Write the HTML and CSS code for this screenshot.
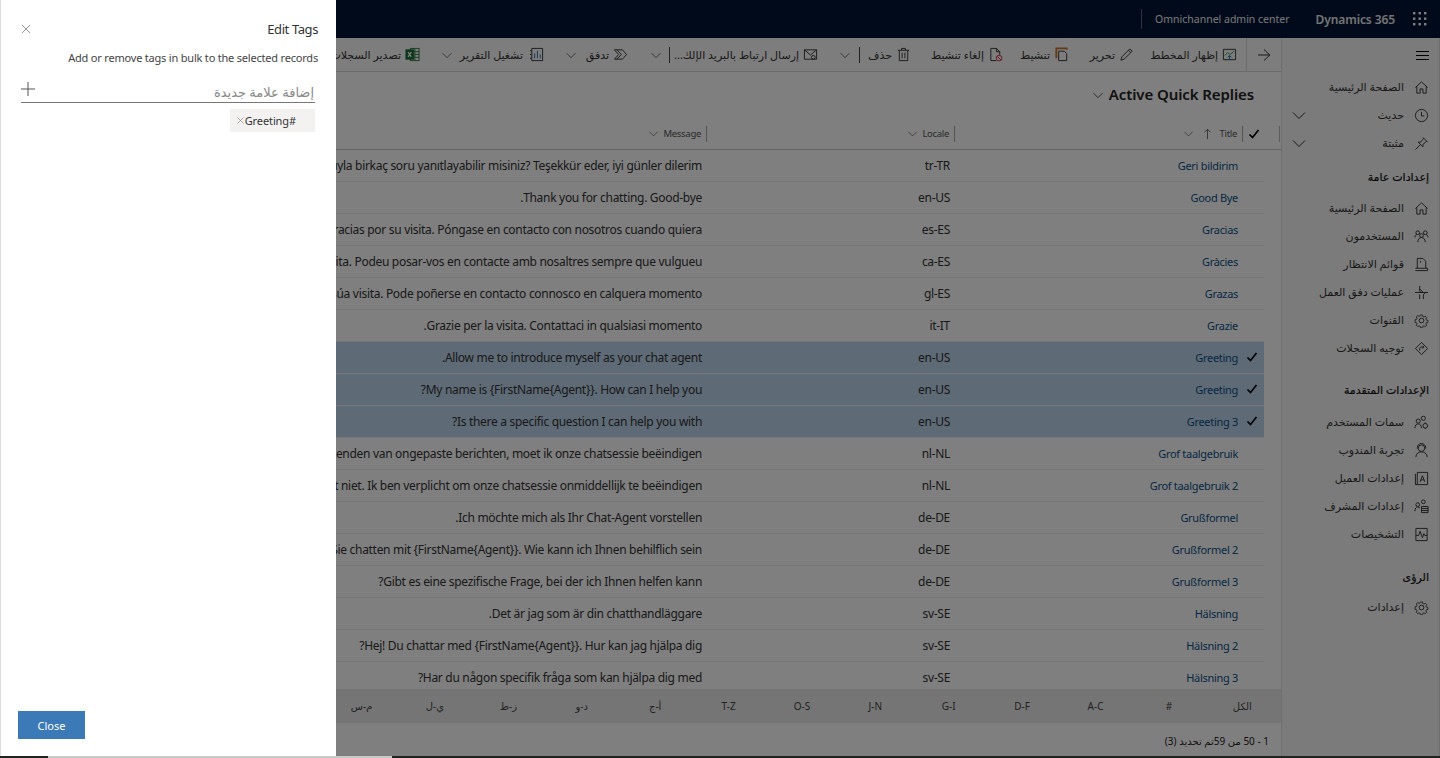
FILE: index.html
```html
<!DOCTYPE html>
<html lang="ar" dir="rtl">
<head>
<meta charset="utf-8">
<title>Active Quick Replies</title>
<link rel="stylesheet" href="styles.css">
</head>
<body>
<svg class="defs" aria-hidden="true">
  <symbol id="i-home" viewBox="0 0 16 16"><path d="M1.500 8 8 2l6.500 6M3 7v7h3.500v-4.500h3V14H13V7"/></symbol>
  <symbol id="i-clock" viewBox="0 0 16 16"><circle cx="8" cy="8" r="6.500"/><path d="M8 4v4.500h3"/></symbol>
  <symbol id="i-pin" viewBox="0 0 16 16"><path d="M9.500 1.500l5 5M10.500 2.500 7 6.500H4.500l5 5V9l4-3.500M7 9 1.500 14.500"/></symbol>
  <symbol id="i-users" viewBox="0 0 16 16"><circle cx="4" cy="4" r="2"/><circle cx="12" cy="4" r="2"/><circle cx="8" cy="7" r="2"/><path d="M1 9c0-2 1-3 2-3M15 9c0-2-1-3-2-3M4 14c0-3 2-5 4-5s4 2 4 5"/></symbol>
  <symbol id="i-queue" viewBox="0 0 16 16"><path d="M3.500 12V1.500h6l3 3V12M1.500 14.500h13M1.500 12h13v2.500M7 4v2"/></symbol>
  <symbol id="i-flow" viewBox="0 0 16 16"><path d="M1 8h14M6 1v5c0 1 1 2 3 2M6 15v-5M10 15v-3c0-2 1-4 3-4M10 8 6 4"/></symbol>
  <symbol id="i-gear" viewBox="0 0 16 16"><circle cx="8" cy="8" r="2.500"/><path d="m6.800 1.500h2.400l.4 1.800 1.300.6 1.600-1 1.700 1.700-1 1.600.6 1.300 1.800.4v2.400l-1.800.4-.6 1.300 1 1.600-1.700 1.700-1.600-1-1.300.6-.4 1.800H6.800l-.4-1.800-1.300-.6-1.600 1-1.700-1.700 1-1.600-.6-1.300-1.800-.4V7.100l1.800-.4.600-1.300-1-1.600 1.700-1.700 1.600 1 1.300-.6z" transform="translate(.8 .8) scale(.9)"/></symbol>
  <symbol id="i-route" viewBox="0 0 16 16"><path d="M8 1.500 14.500 8 8 14.500 1.500 8zM6 10V8c0-1 1-1.500 2-1.500h2M9 5l1.500 1.500L9 8"/></symbol>
  <symbol id="i-attr" viewBox="0 0 16 16"><circle cx="10" cy="3.500" r="2.200"/><circle cx="4.500" cy="6.500" r="2.200"/><path d="M1 14c0-3 1.500-4.500 3.500-4.500S8 11 8 14"/><circle cx="12" cy="11.500" r="2.500"/><path d="M12 7.800v1M12 14v1"/></symbol>
  <symbol id="i-agent" viewBox="0 0 16 16"><circle cx="8" cy="5.500" r="3.500"/><path d="M3.500 6V5a4.500 4.500 0 0 1 9 0v1M2 15c0-3.500 2.500-5.500 6-5.500s6 2 6 5.500"/></symbol>
  <symbol id="i-client" viewBox="0 0 16 16"><path d="M3.500 1.500h11v13h-11zM1.500 3v11.500h2"/><path d="m6.500 11.500 2.500-6.500 2.500 6.500M7.500 9.500h3"/></symbol>
  <symbol id="i-super" viewBox="0 0 16 16"><circle cx="4" cy="6" r="2"/><circle cx="10" cy="3" r="2"/><path d="M1 13c0-3 1.200-4.500 3-4.500 1 0 1.800.4 2.300 1.200"/><path d="M8 8h7v6.500H8zM8 10.200h7M8 12.300h7"/></symbol>
  <symbol id="i-diag" viewBox="0 0 16 16"><path d="M2 1.500h12v13H2zM2 9h3l1.500-4.500 2.500 7 1.500-4.500 1 2H14"/></symbol>
  <symbol id="i-chev" viewBox="0 0 16 16"><path d="m2 5.500 6 6 6-6"/></symbol>
  <symbol id="i-close" viewBox="0 0 16 16"><path d="m2.500 2.500 11 11M13.500 2.500l-11 11"/></symbol>
</svg>

<div class="shell">
  <header class="topbar">
    <svg class="waffle" viewBox="0 0 14 14"><g><rect x="0" y="0" width="2.400" height="2.400"/><rect x="5.500" y="0" width="2.400" height="2.400"/><rect x="11" y="0" width="2.400" height="2.400"/><rect x="0" y="5.500" width="2.400" height="2.400"/><rect x="5.500" y="5.500" width="2.400" height="2.400"/><rect x="11" y="5.500" width="2.400" height="2.400"/><rect x="0" y="11" width="2.400" height="2.400"/><rect x="5.500" y="11" width="2.400" height="2.400"/><rect x="11" y="11" width="2.400" height="2.400"/></g></svg>
    <span class="brand">Dynamics 365</span>
    <span class="appname">Omnichannel admin center</span>
  </header>

  <div class="body-row">
    <nav class="sidebar">
      <div class="burger"><span></span><span></span><span></span></div>
      <a class="nav"><svg class="ic"><use href="#i-home"/></svg><span>الصفحة الرئيسية</span></a>
      <a class="nav"><svg class="ic"><use href="#i-clock"/></svg><span>حديث</span><svg class="nav-chev"><use href="#i-chev"/></svg></a>
      <a class="nav"><svg class="ic"><use href="#i-pin"/></svg><span>مثبتة</span><svg class="nav-chev"><use href="#i-chev"/></svg></a>
      <h3 class="sec sec-a">إعدادات عامة</h3>
      <a class="nav"><svg class="ic"><use href="#i-home"/></svg><span>الصفحة الرئيسية</span></a>
      <a class="nav"><svg class="ic"><use href="#i-users"/></svg><span>المستخدمون</span></a>
      <a class="nav"><svg class="ic"><use href="#i-queue"/></svg><span>قوائم الانتظار</span></a>
      <a class="nav"><svg class="ic"><use href="#i-flow"/></svg><span>عمليات دفق العمل</span></a>
      <a class="nav"><svg class="ic"><use href="#i-gear"/></svg><span>القنوات</span></a>
      <a class="nav"><svg class="ic"><use href="#i-route"/></svg><span>توجيه السجلات</span></a>
      <h3 class="sec sec-b">الإعدادات المتقدمة</h3>
      <a class="nav"><svg class="ic"><use href="#i-attr"/></svg><span>سمات المستخدم</span></a>
      <a class="nav"><svg class="ic"><use href="#i-agent"/></svg><span>تجربة المندوب</span></a>
      <a class="nav"><svg class="ic"><use href="#i-client"/></svg><span>إعدادات العميل</span></a>
      <a class="nav"><svg class="ic"><use href="#i-super"/></svg><span>إعدادات المشرف</span></a>
      <a class="nav"><svg class="ic"><use href="#i-diag"/></svg><span>التشخيصات</span></a>
      <h3 class="sec sec-c">الرؤى</h3>
      <a class="nav"><svg class="ic"><use href="#i-gear"/></svg><span>إعدادات</span></a>
    </nav>

    <main class="main">
      <div class="cmdbar">
        <div class="back"><svg viewBox="0 0 16 16"><path d="M14 8H2M8 2.500 13.800 8 8 13.500"/></svg></div>
        <div class="cmd w-chart"><svg class="ci" viewBox="0 0 16 16"><path d="M1.500 2.500h13v11h-13z"/><path class="green" d="m3 9 3-3 2.500 2L13 4.500"/><path class="blue" d="M8 14V9.500M6 11l2-2 2 2"/></svg><span>إظهار المخطط</span></div>
        <div class="cmd w-edit"><svg class="ci" viewBox="0 0 16 16"><path d="m2 14 1-3.500L11.500 2l2.500 2.500L5.500 13zM10 3.500 12.500 6"/></svg><span>تحرير</span></div>
        <div class="cmd w-act"><svg class="ci" viewBox="0 0 16 16"><path class="orange" d="M2.500 12V1.500h11V3"/><path d="M5 14.500v-10h6l2.500 2.500v7.500z"/></svg><span>تنشيط</span></div>
        <div class="cmd w-deact"><svg class="ci" viewBox="0 0 16 16"><path d="M9 14.500H3v-13h6l3.500 3.500v3.500M9 1.500V5h3.500"/><circle class="red" cx="11.800" cy="11.800" r="3"/><path class="red" d="m9.800 9.800 4 4"/></svg><span>إلغاء تنشيط</span></div>
        <div class="cmd w-del"><svg class="ci" viewBox="0 0 16 16"><path d="M2 3.500h12M6 3.500V1.500h4v2M3.500 3.500v11h9v-11M6.500 6v6M9.500 6v6"/></svg><span>حذف</span></div>
        <div class="sep"></div>
        <svg class="cmd-chev chev-a"><use href="#i-chev"/></svg>
        <div class="cmd w-mail"><svg class="ci" viewBox="0 0 16 16"><path d="M1.500 3h13v10h-13zM1.500 3 8 8.500 14.500 3"/><circle cx="11" cy="11" r="2"/></svg><span>إرسال ارتباط بالبريد الإلك...</span></div>
        <div class="sep sep-b"></div>
        <svg class="cmd-chev chev-b"><use href="#i-chev"/></svg>
        <div class="cmd w-flow"><svg class="ci" viewBox="0 0 16 16"><path d="M1.500 3h8.500l4.500 5-4.500 5H1.500L6 8zM4 3l5 5-5 5"/></svg><span>تدفق</span></div>
        <svg class="cmd-chev chev-c"><use href="#i-chev"/></svg>
        <div class="cmd w-report"><svg class="ci" viewBox="0 0 16 16"><path d="M3 1.500h11.500v13H3zM1 4h2M1 8h2M1 12h2"/><path class="blue" d="M6 7v5M9 4v8M12 8v4"/></svg><span>تشغيل التقرير</span></div>
        <svg class="cmd-chev chev-d"><use href="#i-chev"/></svg>
        <div class="cmd w-export"><svg class="ci" viewBox="0 0 16 16"><rect class="xl-line" x="6" y="1.500" width="9" height="13"/><path class="xl-line" d="M6 5h9M6 8h9M6 11h9M10.500 1.500v13"/><rect class="xl-box" x="1" y="3" width="8" height="10"/><path class="xl-x" d="m3.300 5.500 3.400 5M6.700 5.500l-3.400 5"/></svg><span>تصدير السجلات</span></div>
      </div>

      <div class="viewtitle">
        <h1>Active Quick Replies</h1>
        <svg class="title-chev"><use href="#i-chev"/></svg>
      </div>

      <div class="grid-head">
        <div class="c-check"><svg class="check" viewBox="0 0 12 12"><path d="m1.500 6.500 3 3 6-7.500"/></svg></div>
        <div class="hcell c-title"><span>Title</span><svg class="sort" viewBox="0 0 10 14"><path d="M5 13V1.500M1.500 5 5 1.500 8.500 5"/></svg><svg class="hchev sp"><use href="#i-chev"/></svg></div>
        <div class="hcell c-locale"><span>Locale</span><svg class="hchev"><use href="#i-chev"/></svg></div>
        <div class="hcell c-msg"><span>Message</span><svg class="hchev"><use href="#i-chev"/></svg></div>
      </div>

      <div class="rows">
        <div class="row"><div class="c-check"></div><div class="cell c-title link">Geri bildirim</div><div class="cell c-locale">tr-TR</div><div class="cell c-msg">Deneyiminizle ilgili olarak bize yardımcı olmak amacıyla birkaç soru yanıtlayabilir misiniz? Teşekkür eder, iyi günler dilerim</div></div>
        <div class="row"><div class="c-check"></div><div class="cell c-title link">Good Bye</div><div class="cell c-locale">en-US</div><div class="cell c-msg">Thank you for chatting. Good-bye.</div></div>
        <div class="row"><div class="c-check"></div><div class="cell c-title link">Gracias</div><div class="cell c-locale">es-ES</div><div class="cell c-msg">Muchas gracias por su visita. Póngase en contacto con nosotros cuando quiera</div></div>
        <div class="row"><div class="c-check"></div><div class="cell c-title link">Gràcies</div><div class="cell c-locale">ca-ES</div><div class="cell c-msg">Moltes gràcies per la vostra visita. Podeu posar-vos en contacte amb nosaltres sempre que vulgueu</div></div>
        <div class="row"><div class="c-check"></div><div class="cell c-title link">Grazas</div><div class="cell c-locale">gl-ES</div><div class="cell c-msg">Moitas grazas pola súa visita. Pode poñerse en contacto connosco en calquera momento</div></div>
        <div class="row"><div class="c-check"></div><div class="cell c-title link">Grazie</div><div class="cell c-locale">it-IT</div><div class="cell c-msg">Grazie per la visita. Contattaci in qualsiasi momento.</div></div>
        <div class="row sel"><div class="c-check"><svg class="check" viewBox="0 0 12 12"><path d="m1.500 6.500 3 3 6-7.500"/></svg></div><div class="cell c-title link">Greeting</div><div class="cell c-locale">en-US</div><div class="cell c-msg">Allow me to introduce myself as your chat agent.</div></div>
        <div class="row sel"><div class="c-check"><svg class="check" viewBox="0 0 12 12"><path d="m1.500 6.500 3 3 6-7.500"/></svg></div><div class="cell c-title link">Greeting</div><div class="cell c-locale">en-US</div><div class="cell c-msg">My name is {FirstName{Agent}}. How can I help you?</div></div>
        <div class="row sel"><div class="c-check"><svg class="check" viewBox="0 0 12 12"><path d="m1.500 6.500 3 3 6-7.500"/></svg></div><div class="cell c-title link">Greeting 3</div><div class="cell c-locale">en-US</div><div class="cell c-msg">Is there a specific question I can help you with?</div></div>
        <div class="row"><div class="c-check"></div><div class="cell c-title link">Grof taalgebruik</div><div class="cell c-locale">nl-NL</div><div class="cell c-msg">Als u doorgaat met het verzenden van ongepaste berichten, moet ik onze chatsessie beëindigen</div></div>
        <div class="row"><div class="c-check"></div><div class="cell c-title link">Grof taalgebruik 2</div><div class="cell c-locale">nl-NL</div><div class="cell c-msg">Ik accepteer dit taalgebruik absoluut niet. Ik ben verplicht om onze chatsessie onmiddellijk te beëindigen</div></div>
        <div class="row"><div class="c-check"></div><div class="cell c-title link">Grußformel</div><div class="cell c-locale">de-DE</div><div class="cell c-msg">Ich möchte mich als Ihr Chat-Agent vorstellen.</div></div>
        <div class="row"><div class="c-check"></div><div class="cell c-title link">Grußformel 2</div><div class="cell c-locale">de-DE</div><div class="cell c-msg">Guten Tag, Sie chatten mit {FirstName{Agent}}. Wie kann ich Ihnen behilflich sein</div></div>
        <div class="row"><div class="c-check"></div><div class="cell c-title link">Grußformel 3</div><div class="cell c-locale">de-DE</div><div class="cell c-msg">Gibt es eine spezifische Frage, bei der ich Ihnen helfen kann?</div></div>
        <div class="row"><div class="c-check"></div><div class="cell c-title link">Hälsning</div><div class="cell c-locale">sv-SE</div><div class="cell c-msg">Det är jag som är din chatthandläggare.</div></div>
        <div class="row"><div class="c-check"></div><div class="cell c-title link">Hälsning 2</div><div class="cell c-locale">sv-SE</div><div class="cell c-msg">Hej! Du chattar med {FirstName{Agent}}. Hur kan jag hjälpa dig?</div></div>
        <div class="row"><div class="c-check"></div><div class="cell c-title link">Hälsning 3</div><div class="cell c-locale">sv-SE</div><div class="cell c-msg">Har du någon specifik fråga som kan hjälpa dig med?</div></div>
      </div>

      <div class="jumpbar">
        <a>الكل</a><a>#</a><a>A-C</a><a>D-F</a><a>G-I</a><a>J-N</a><a>O-S</a><a>T-Z</a><a>أ-ج</a><a>د-و</a><a>ز-ط</a><a>ي-ل</a><a>م-س</a>
      </div>
      <div class="statusbar"><span>1 - 50 من 59</span><span>تم تحديد (3)</span></div>
    </main>
  </div>

  <div class="overlay"></div>

  <aside class="panel">
    <div class="panel-head">
      <h2>Edit Tags</h2>
      <svg class="panel-x"><use href="#i-close"/></svg>
    </div>
    <p class="panel-sub">Add or remove tags in bulk to the selected records</p>
    <div class="tag-input">
      <span>إضافة علامة جديدة</span>
      <svg class="plus" viewBox="0 0 14 14"><path d="M7 0v14M0 7h14"/></svg>
    </div>
    <div class="tag-row">
      <div class="tag"><span>#Greeting</span><svg class="tag-x"><use href="#i-close"/></svg></div>
    </div>
    <button class="close-btn">Close</button>
  </aside>
</div>
<div class="edge"></div>
</body>
</html>
```

FILE: styles.css
```css
* { box-sizing: border-box; }
html, body { margin: 0; padding: 0; height: 758px; overflow: hidden; }
body {
  font-family: "Noto Sans", "DejaVu Sans", sans-serif;
  font-size: 12px;
  color: #333;
  background: #fff;
}
.defs { position: absolute; width: 0; height: 0; }
svg { fill: none; stroke: currentColor; stroke-width: 1; flex: none; }

.shell { position: relative; height: 756px; display: flex; flex-direction: column; overflow: hidden; }
.edge { height: 2px; background: linear-gradient(90deg, #222 48px, #c8c8c8 48px, #c8c8c8 392px, #222 392px); }

.overlay { position: absolute; inset: 0; background: rgba(0, 0, 0, .5); }

/* top bar */
.topbar { height: 38px; flex: none; background: #001535; color: #fff; display: flex; align-items: center; padding-right: 13px; }
.waffle { width: 14px; height: 14px; fill: #fff; stroke: none; }
.brand { direction: ltr; font-weight: 600; font-size: 12px; letter-spacing: -.1px; margin-right: 18px; color: #e8e8e8; }
.appname { direction: ltr; font-size: 10.500px; margin-right: 26px; padding-left: 13px; border-left: 1px solid #667; height: 20px; line-height: 20px; color: #eee; }

.body-row { flex: 1; display: flex; min-height: 0; }

/* sidebar */
.sidebar { width: 159px; flex: none; background: #f6f6f6; border-right: 1px solid #ddd; border-left: 1px solid #ddd; display: flex; flex-direction: column; }
.burger { height: 35px; flex: none; display: flex; flex-direction: column; justify-content: center; gap: 3px; padding-right: 10px; }
.burger span { display: block; width: 13px; height: 1px; background: #000; }
.nav { position: relative; height: 28px; flex: none; display: flex; align-items: center; padding-right: 10px; gap: 10px; font-size: 11px; color: #333; }
.nav span { padding-bottom: 2px; }
.ic { width: 15px; height: 15px; color: #333; }
.nav-chev { position: absolute; left: 9px; top: 6px; width: 16px; height: 16px; color: #333; }
.sec { margin: 0; height: 28px; line-height: 28px; flex: none; font-size: 11px; font-weight: 400; padding-right: 10px; color: #111; -webkit-text-stroke: .2px #111; }
.sec-a { margin-top: 6px; margin-bottom: 3px; }
.sec-b { margin-top: 14px; margin-bottom: 4px; }
.sec-c { margin-top: 15px; margin-bottom: 2px; }

/* main */
.main { flex: 1; min-width: 0; display: flex; flex-direction: column; background: #fff; }

.cmdbar { height: 34px; flex: none; display: flex; align-items: center; background: #fafafa; border-bottom: 1px solid #d8d8d8; font-size: 11px; overflow: hidden; white-space: nowrap; }
.back { width: 35px; height: 34px; flex: none; display: flex; align-items: center; justify-content: center; border-left: 1px solid #d8d8d8; }
.back svg { width: 16px; height: 16px; }
.cmd { display: flex; align-items: center; gap: 4px; flex: none; }
.ci { width: 15px; height: 15px; }
.w-chart { margin-right: 9px; width: 86px; }
.w-edit { margin-right: 17px; width: 45px; }
.w-act { margin-right: 20px; width: 48px; }
.w-deact { margin-right: 18px; width: 72px; }
.w-del { margin-right: 20px; width: 42px; }
.sep { width: 1px; height: 16px; background: #444; flex: none; margin-right: 9px; }
.sep-b { margin-right: 12px; }
.cmd-chev { width: 12px; height: 12px; flex: none; color: #444; }
.chev-a { margin-right: 8px; }
.w-mail { margin-right: 21px; width: 136px; letter-spacing: -.1px; }
.chev-b { margin-right: 7px; }
.w-flow { margin-right: 22px; width: 41px; }
.chev-c { margin-right: 10px; }
.w-report { margin-right: 21px; width: 80px; gap: 6px; }
.chev-d { margin-right: 11px; }
.w-export { margin-right: 21px; }
.green { stroke: #2e9b40; }
.blue { stroke: #1f6fc0; }
.orange { stroke: #c9762a; stroke-width: 2; }
.red { stroke: #d13438; }
.xl-line { stroke: #2c7a3f; }
.xl-box { fill: #1d6f3a; stroke: #1d6f3a; }
.xl-x { stroke: #fff; stroke-width: 1.300; }

.viewtitle { height: 46px; flex: none; display: flex; align-items: center; padding-right: 27px; gap: 5px; }
.viewtitle h1 { margin: 0 0 2px; direction: ltr; font-size: 15px; letter-spacing: -.1px; line-height: 44px; font-weight: 600; color: #222; }
.title-chev { width: 12px; height: 12px; color: #222; }

.grid-head, .row { display: grid; grid-template-columns: 21px 288px 248px 1fr; margin-right: 17px; }
.grid-head { position: relative; height: 32px; flex: none; border-bottom: 1px solid #c8c8c8; margin-right: 0; padding-right: 17px; font-size: 9.500px; letter-spacing: -.3px; color: #555; align-items: center; }
.grid-head::before { content: ""; position: absolute; right: 1px; top: 8px; width: 1px; height: 16px; background: #bbb; }
.c-check { display: flex; align-items: center; justify-content: center; }
.check { width: 12px; height: 12px; stroke: #000; stroke-width: 1.700; }
.row .check { margin-right: 4px; margin-bottom: 2px; }
.hcell { height: 16px; display: flex; align-items: center; gap: 4px; padding-right: 5px; border-right: 1px solid #aaa; }
.hcell span { direction: ltr; }
.sort { width: 9px; height: 12px; margin-right: 4px; }
.hchev { width: 11px; height: 11px; color: #555; }
.hchev.sp { margin-right: 5px; }

.rows { flex: 1; min-height: 0; overflow: hidden; }
.row { height: 32px; border-bottom: 1px solid #ececec; align-items: center; letter-spacing: -.3px; }
.row.sel { background: #bcd5ea; border-bottom-color: #e8f0f6; }
.cell { padding-right: 5px; padding-top: 1px; white-space: nowrap; overflow: hidden; line-height: 30px; }
.link { color: #0b4f86; font-size: 11px; }

.jumpbar { height: 34px; flex: none; background: #ebebeb; display: flex; align-items: center; padding-right: 2px; font-size: 10px; color: #444; overflow: hidden; }
.jumpbar a { flex: 0 0 73.400px; text-align: center; }

.statusbar { height: 33px; flex: none; display: flex; align-items: center; padding-right: 12px; padding-top: 2px; font-size: 10px; letter-spacing: -.1px; color: #222; }

/* panel */
.panel { position: absolute; top: 0; left: 0; bottom: 0; width: 336px; background: #fff; border-left: 1px solid #ddd; display: flex; flex-direction: column; padding: 20px 18px 17px 17px; }
.panel-head { display: flex; justify-content: space-between; align-items: center; height: 18px; }
.panel-head h2 { margin: 0; direction: ltr; font-size: 13px; letter-spacing: -.4px; line-height: 18px; font-weight: 400; color: #333; }
.panel-x { width: 12px; height: 12px; margin-left: 2px; color: #777; }
.panel-sub { margin: 12px 0 0; direction: ltr; text-align: right; font-size: 11px; letter-spacing: -.2px; line-height: 16px; color: #444; }
.tag-input { margin: 10px 3px 0 3px; height: 27px; border-bottom: 1px solid #777; display: flex; justify-content: space-between; align-items: center; padding-right: 1px; font-size: 13px; color: #888; }
.tag-input span { padding-top: 6px; }
.plus { width: 14px; height: 14px; color: #555; }
.tag-row { display: flex; margin: 6px 3px 0 3px; }
.tag { width: 85px; height: 23px; background: #f3f2f1; display: flex; align-items: center; padding-right: 19px; font-size: 11px; letter-spacing: -.1px; color: #333; }
.tag-x { width: 9px; height: 9px; color: #777; }
.close-btn { margin-top: auto; align-self: flex-end; width: 67px; height: 28px; background: #3b79b7; color: #fff; border: 0; font: inherit; font-size: 11px; }
```
